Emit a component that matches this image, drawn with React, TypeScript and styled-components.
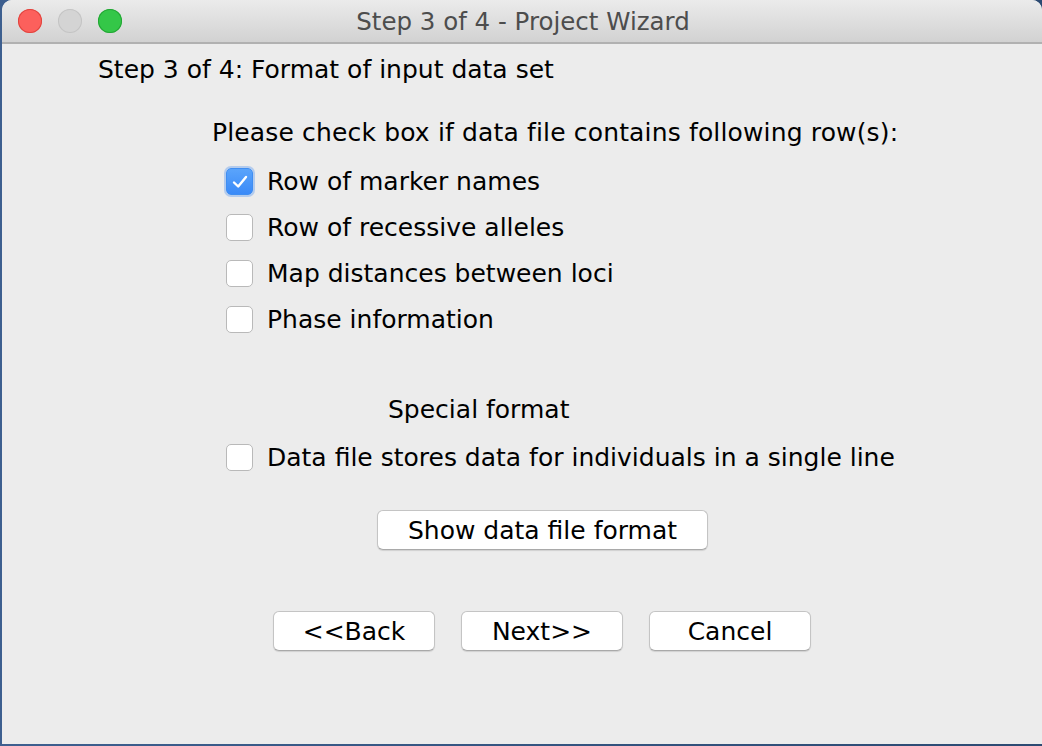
import React from "react";
import styled, { createGlobalStyle } from "styled-components";

const Global = createGlobalStyle`
  html, body { margin: 0; padding: 0; }
  body {
    width: 1042px;
    height: 746px;
    overflow: hidden;
    background: linear-gradient(90deg, #3d5f8f, #2c4a72);
    font-family: "DejaVu Sans", "Liberation Sans", sans-serif;
  }
`;

const Window = styled.div`
  margin-left: 2px;
  width: 1040px;
  height: 744px;
  background: #ececec;
  border-top-left-radius: 10px;
  border-top-right-radius: 10px;
  overflow: hidden;
  display: flex;
  flex-direction: column;
`;

const TitleBar = styled.div`
  height: 42px;
  flex: none;
  position: relative;
  display: flex;
  align-items: center;
  justify-content: center;
  background: linear-gradient(#ebebeb, #d2d2d2);
  border-bottom: 2px solid #b1b1b1;
`;

const Lights = styled.div`
  position: absolute;
  left: 16px;
  top: 9px;
  display: flex;
  gap: 16px;
`;

const Light = styled.span<{ $c: string; $b: string }>`
  width: 24px;
  height: 24px;
  border-radius: 50%;
  background: ${(p) => p.$c};
  box-shadow: inset 0 0 0 1px ${(p) => p.$b};
`;

const Title = styled.div`
  font-size: 24.5px;
  color: #4d4d4d;
  margin-left: 2px;
`;

const Content = styled.div`
  display: flex;
  flex-direction: column;
  color: #000;
  font-size: 25px;
  line-height: 26px;
`;

const Heading = styled.div`
  margin: 13px 0 0 96px;
`;

const Prompt = styled.div`
  margin: 37px 0 0 210px;
  letter-spacing: 0.15px;
`;

const CheckList = styled.div`
  display: flex;
  flex-direction: column;
  margin: 22px 0 0 224px;
  gap: 19px;
`;

const Row = styled.label`
  display: flex;
  align-items: center;
  gap: 14px;
  height: 27px;
`;

const Box = styled.span<{ $checked?: boolean }>`
  width: 27px;
  height: 27px;
  flex: none;
  box-sizing: border-box;
  border-radius: 5px;
  display: flex;
  align-items: center;
  justify-content: center;
  background: ${(p) => (p.$checked ? "linear-gradient(#5aa4fb, #3a8af8)" : "#fff")};
  border: ${(p) => (p.$checked ? "1px solid #3f8ef2" : "1.5px solid #b9b9b9")};
  box-shadow: ${(p) => (p.$checked ? "0 0 0 2px rgba(110,165,240,0.45)" : "none")};
`;

const Special = styled.div`
  margin: 64px 0 0 386px;
`;

const SingleLine = styled.div`
  margin: 21px 0 0 224px;
`;

const ShowRow = styled.div`
  margin: 39px 0 0 375px;
`;

const Btn = styled.button<{ $w: number }>`
  width: ${(p) => p.$w}px;
  height: 40px;
  box-sizing: border-box;
  background: #fff;
  border: 1px solid #c4c4c4;
  border-bottom-color: #a9a9a9;
  border-radius: 6px;
  box-shadow: 0 1px 1px rgba(0, 0, 0, 0.12);
  font-family: "DejaVu Sans", "Liberation Sans", sans-serif;
  font-size: 25px;
  color: #000;
  padding: 0;
`;

const ButtonRow = styled.div`
  display: flex;
  gap: 26px;
  margin: 61px 0 0 271px;
`;

const Check = () => (
  <svg width="18" height="16" viewBox="0 0 18 16">
    <path d="M3 8.5 L7.2 12.5 L15 3" fill="none" stroke="#fff" strokeWidth="2.4" strokeLinecap="round" strokeLinejoin="round" />
  </svg>
);

const items = [
  { label: "Row of marker names", checked: true },
  { label: "Row of recessive alleles", checked: false },
  { label: "Map distances between loci", checked: false },
  { label: "Phase information", checked: false },
];

export default function App() {
  return (
    <>
      <Global />
      <Window>
        <TitleBar>
          <Lights>
            <Light $c="#fc605c" $b="#e0443e" />
            <Light $c="#d4d4d4" $b="#c4c4c4" />
            <Light $c="#34c748" $b="#23a534" />
          </Lights>
          <Title>Step 3 of 4 - Project Wizard</Title>
        </TitleBar>
        <Content>
          <Heading>Step 3 of 4: Format of input data set</Heading>
          <Prompt>Please check box if data file contains following row(s):</Prompt>
          <CheckList>
            {items.map((it) => (
              <Row key={it.label}>
                <Box $checked={it.checked}>{it.checked && <Check />}</Box>
                {it.label}
              </Row>
            ))}
          </CheckList>
          <Special>Special format</Special>
          <SingleLine>
            <Row>
              <Box />
              Data file stores data for individuals in a single line
            </Row>
          </SingleLine>
          <ShowRow>
            <Btn $w={331}>Show data file format</Btn>
          </ShowRow>
          <ButtonRow>
            <Btn $w={162}>&lt;&lt;Back</Btn>
            <Btn $w={162}>Next&gt;&gt;</Btn>
            <Btn $w={162}>Cancel</Btn>
          </ButtonRow>
        </Content>
      </Window>
    </>
  );
}
